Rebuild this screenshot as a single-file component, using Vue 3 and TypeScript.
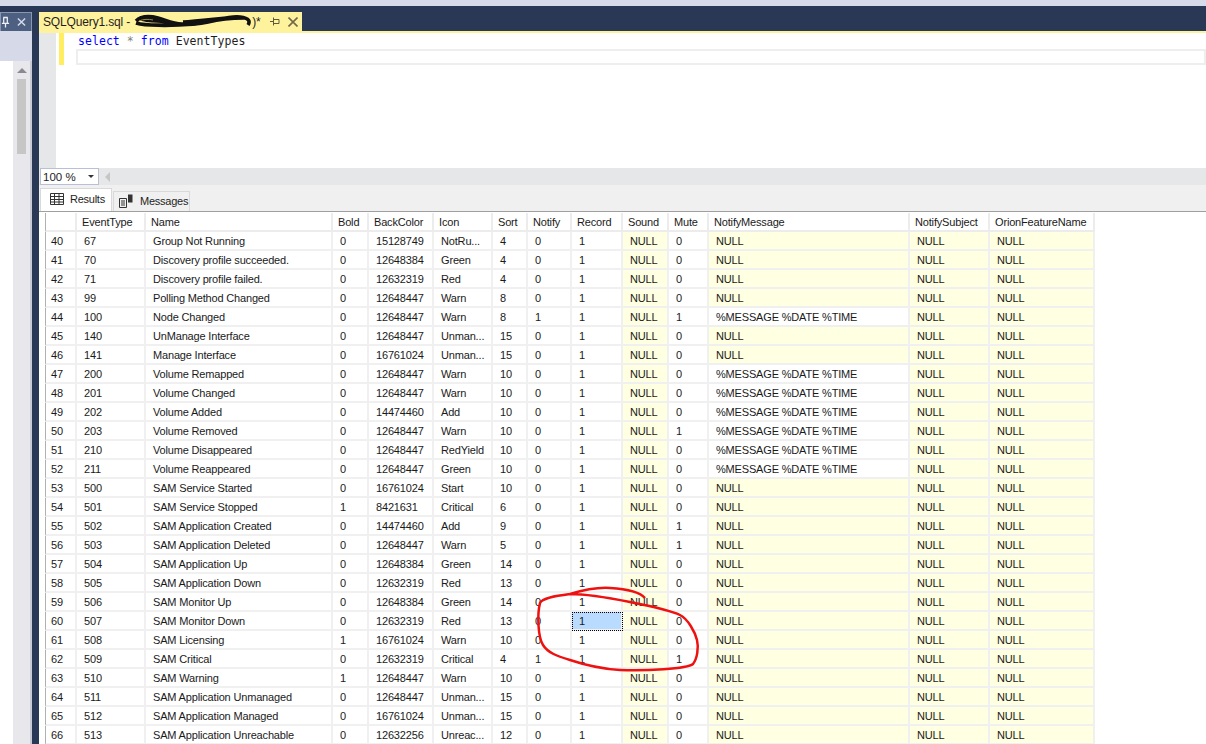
<script setup lang="ts">
const cols = [
  { name: '', w: 32 }, { name: 'EventType', w: 69 }, { name: 'Name', w: 187 }, { name: 'Bold', w: 36 },
  { name: 'BackColor', w: 65 }, { name: 'Icon', w: 59 }, { name: 'Sort', w: 35 }, { name: 'Notify', w: 44 },
  { name: 'Record', w: 51 }, { name: 'Sound', w: 46 }, { name: 'Mute', w: 40 }, { name: 'NotifyMessage', w: 201 },
  { name: 'NotifySubject', w: 80 }, { name: 'OrionFeatureName', w: 105 },
]
const gridTemplate = cols.map((c) => c.w + 'px').join(' ')
const MSG = '%MESSAGE %DATE %TIME'
const raw: [number, string, number, number, string, number, number, number, string][] = [
  [67, 'Group Not Running', 0, 15128749, 'NotRu...', 4, 0, 0, 'NULL'],
  [70, 'Discovery profile succeeded.', 0, 12648384, 'Green', 4, 0, 0, 'NULL'],
  [71, 'Discovery profile failed.', 0, 12632319, 'Red', 4, 0, 0, 'NULL'],
  [99, 'Polling Method Changed', 0, 12648447, 'Warn', 8, 0, 0, 'NULL'],
  [100, 'Node Changed', 0, 12648447, 'Warn', 8, 1, 1, MSG],
  [140, 'UnManage Interface', 0, 12648447, 'Unman...', 15, 0, 0, 'NULL'],
  [141, 'Manage Interface', 0, 16761024, 'Unman...', 15, 0, 0, 'NULL'],
  [200, 'Volume Remapped', 0, 12648447, 'Warn', 10, 0, 0, MSG],
  [201, 'Volume Changed', 0, 12648447, 'Warn', 10, 0, 0, MSG],
  [202, 'Volume Added', 0, 14474460, 'Add', 10, 0, 0, MSG],
  [203, 'Volume Removed', 0, 12648447, 'Warn', 10, 0, 1, MSG],
  [210, 'Volume Disappeared', 0, 12648447, 'RedYield', 10, 0, 0, MSG],
  [211, 'Volume Reappeared', 0, 12648447, 'Green', 10, 0, 0, MSG],
  [500, 'SAM Service Started', 0, 16761024, 'Start', 10, 0, 0, 'NULL'],
  [501, 'SAM Service Stopped', 1, 8421631, 'Critical', 6, 0, 0, 'NULL'],
  [502, 'SAM Application Created', 0, 14474460, 'Add', 9, 0, 1, 'NULL'],
  [503, 'SAM Application Deleted', 0, 12648447, 'Warn', 5, 0, 1, 'NULL'],
  [504, 'SAM Application Up', 0, 12648384, 'Green', 14, 0, 0, 'NULL'],
  [505, 'SAM Application Down', 0, 12632319, 'Red', 13, 0, 0, 'NULL'],
  [506, 'SAM Monitor Up', 0, 12648384, 'Green', 14, 0, 0, 'NULL'],
  [507, 'SAM Monitor Down', 0, 12632319, 'Red', 13, 0, 0, 'NULL'],
  [508, 'SAM Licensing', 1, 16761024, 'Warn', 10, 0, 0, 'NULL'],
  [509, 'SAM Critical', 0, 12632319, 'Critical', 4, 1, 1, 'NULL'],
  [510, 'SAM Warning', 1, 12648447, 'Warn', 10, 0, 0, 'NULL'],
  [511, 'SAM Application Unmanaged', 0, 12648447, 'Unman...', 15, 0, 0, 'NULL'],
  [512, 'SAM Application Managed', 0, 16761024, 'Unman...', 15, 0, 0, 'NULL'],
  [513, 'SAM Application Unreachable', 0, 12632256, 'Unreac...', 12, 0, 0, 'NULL'],
]
const rows = raw.map((r, i) => ({
  n: 40 + i, type: r[0], name: r[1], bold: r[2], back: r[3], icon: r[4], sort: r[5], notify: r[6], mute: r[7], msg: r[8],
}))
</script>

<template>
  <div class="page">
    <div class="topstrip"></div>
    <div class="main">
      <aside class="side">
        <div class="side-head">
          <svg width="10" height="12" viewBox="0 0 10 12"><path d="M2.500 1h5M3 1v6M7 1v6M1 7.500h8M5 8v4" stroke="#eef0f6" stroke-width="1.400" fill="none" /></svg>
          <svg width="10" height="10" viewBox="0 0 10 10"><path d="M1 1l8 8M9 1l-8 8" stroke="#d6dbe9" stroke-width="1.600" /></svg>
        </div>
        <div class="side-sub"></div>
        <div class="side-white">
          <div class="side-scroll">
            <span class="arrow-up"></span>
            <span class="thumb"></span>
          </div>
        </div>
      </aside>
      <section class="doc">
        <div class="tabbar">
          <div class="tab">
            <span class="tabtitle">SQLQuery1.sql -</span>
            <svg class="scribble" width="122" height="15" viewBox="0 0 122 15"><path d="M3 7c5-5 14-5 22-3s14 6 24 6 20-1 30-3 18-5 28-4 10 5 8 8M3 9c10 3 22 2 34 2s26 0 38-3 20-4 36-4M6 4c12 5 22 1 32 5M50 8c16-1 40-4 54-5M20 11c12 1 30 0 44-1" fill="none" stroke="#111" stroke-width="3.600" /><path d="M6 7c4-2 10-2 14-1" fill="none" stroke="#9a8a4a" stroke-width="1" /></svg>
            <span class="tabstar">)*</span>
            <svg class="tabpin" width="10" height="9" viewBox="0 0 10 9"><path d="M3.500 .5v8M3.500 2.500h5.500v4H3.500M0 4.500h3.500" stroke="#5e5a3c" fill="none" /></svg>
            <svg class="tabclose" width="10" height="10" viewBox="0 0 10 10"><path d="M.5.5l9 9M9.500.5l-9 9" stroke="#6f6a48" stroke-width="1.600" /></svg>
          </div>
        </div>
        <div class="tabline"></div>
        <div class="editor">
          <div class="gutter"></div>
          <div class="marginband"><span class="changed"></span></div>
          <div class="code">
            <div class="codeline"><span class="kw">select</span> <span class="op">*</span> <span class="kw">from</span> EventTypes</div>
            <div class="curline"></div>
          </div>
        </div>
        <div class="zoombar">
          <div class="zoombox"><span>100 %</span><span class="caret"></span></div>
          <span class="leftarrow"></span>
        </div>
        <div class="restabs">
          <div class="rtab active">
            <svg width="14" height="12" viewBox="0 0 14 12"><path d="M.5.5h13v11H.5zM.5 3.500h13M.5 6.500h13M.5 9h13M4.500.5v11M9 .5v11" fill="none" stroke="#333" /></svg>
            <span>Results</span>
          </div>
          <div class="rtab">
            <svg width="14" height="14" viewBox="0 0 14 14"><path d="M.5 4.500h7v9h-7zM2 7h4M2 9h4M2 11h4" fill="none" stroke="#333" /><path d="M9 .5h4.500v8H9z" fill="#333" /></svg>
            <span>Messages</span>
          </div>
        </div>
        <div class="gridwrap">
          <div class="gridrow head" :style="{ gridTemplateColumns: gridTemplate }">
            <div v-for="c in cols" :key="c.name" class="hcell">{{ c.name }}</div>
          </div>
          <div v-for="r in rows" :key="r.n" class="gridrow" :style="{ gridTemplateColumns: gridTemplate }">
            <div class="cell num">{{ r.n }}</div>
            <div class="cell">{{ r.type }}</div>
            <div class="cell">{{ r.name }}</div>
            <div class="cell">{{ r.bold }}</div>
            <div class="cell">{{ r.back }}</div>
            <div class="cell">{{ r.icon }}</div>
            <div class="cell">{{ r.sort }}</div>
            <div class="cell">{{ r.notify }}</div>
            <div class="cell" :class="{ selected: r.n === 60 }">1</div>
            <div class="cell null">NULL</div>
            <div class="cell">{{ r.mute }}</div>
            <div class="cell" :class="{ null: r.msg === 'NULL' }">{{ r.msg }}</div>
            <div class="cell null">NULL</div>
            <div class="cell null">NULL</div>
          </div>
        </div>
        <svg class="ink" width="170" height="90" viewBox="0 0 170 90">
          <path d="M110 13C104 6 90 4 75 3 60 2 45 6 35 9 55 9 75 13 95 17 115 21 135 25 145 30 153 34 160 47 162 55 164 63 162 74 158 79 152 84 110 86 85 85 68 84 50 80 35 75 22 71 13 68 8 60 3 52 2 30 5 18 7 13 20 11 35 9" fill="none" stroke="#ef1010" stroke-width="2.500" />
        </svg>
      </section>
    </div>
  </div>
</template>

<style>
html, body { margin: 0; padding: 0; background: #fff; overflow: hidden; }
</style>

<style scoped>
.page { width: 1206px; height: 744px; display: flex; flex-direction: column; overflow: hidden; font-family: "Liberation Sans", Arial, sans-serif; background: #293955; }
.topstrip { height: 6px; background: #d6dbe9; flex: none; }
.main { flex: 1; display: flex; min-height: 0; padding-top: 6px; }
.side { width: 32px; flex: none; display: flex; flex-direction: column; }
.side-head { height: 19px; flex: none; box-sizing: border-box; background: #4d6082; border: 1px solid #8a97b3; border-bottom: none; display: flex; align-items: center; justify-content: flex-end; gap: 7px; padding-right: 5px; }
.side-sub { height: 30px; flex: none; background: #d5d9e8; }
.side-white { flex: 1; min-height: 0; background: #fff; border-right: 2px solid #c8cbd4; box-sizing: border-box; }
.side-scroll { width: 17px; margin-left: 13px; height: 100%; background: #e8e8ec; display: flex; flex-direction: column; align-items: center; padding-top: 7px; box-sizing: border-box; }
.arrow-up { width: 0; height: 0; border-left: 5px solid transparent; border-right: 5px solid transparent; border-bottom: 5px solid #8a8a90; margin-bottom: 6px; }
.thumb { width: 9px; height: 75px; background: #c6c6c6; }
.doc { flex: 1; position: relative; margin-left: 7px; display: flex; flex-direction: column; min-width: 0; background: #fff; }
.tabbar { height: 19px; background: #293955; flex: none; }
.tab { height: 19px; width: 263px; background: #fff29d; display: flex; align-items: center; padding-left: 4px; box-sizing: border-box; font-size: 12px; color: #1e1e1e; }
.tabtitle { white-space: nowrap; letter-spacing: -.15px; }
.scribble { margin-left: 3px; flex: none; }
.tabstar { margin-left: -3px; font-size: 12px; white-space: nowrap; }
.tabpin { margin-left: auto; margin-right: 8px; flex: none; }
.tabclose { margin-right: 4px; flex: none; }
.tabline { height: 2px; background: #fff29d; flex: none; }
.editor { height: 135px; flex: none; display: flex; background: #fff; }
.gutter { width: 17px; background: #e6e7e8; }
.marginband { width: 20px; background: #fff; }
.changed { display: block; width: 5px; height: 32px; background: #ffee62; margin-left: 3px; }
.code { flex: 1; font-family: "DejaVu Sans Mono", monospace; font-size: 11.500px; }
.codeline { height: 16px; line-height: 16px; padding-left: 2px; color: #1e1e1e; white-space: pre; letter-spacing: .05px; }
.kw { color: #0000ff; }
.op { color: #808080; }
.curline { height: 16px; border: 2px solid #eeeeee; box-sizing: border-box; }
.zoombar { height: 17px; flex: none; background: #e6e7e8; display: flex; align-items: center; gap: 6px; }
.zoombox { width: 59px; height: 17px; margin-left: 1px; box-sizing: border-box; background: #fff; border: 1px solid #b8c0d6; display: flex; align-items: center; justify-content: space-between; padding: 0 4px 0 2px; font-size: 11.500px; color: #1e1e1e; }
.caret { width: 0; height: 0; border-left: 3px solid transparent; border-right: 3px solid transparent; border-top: 3px solid #333; }
.leftarrow { width: 0; height: 0; border-top: 5px solid transparent; border-bottom: 5px solid transparent; border-right: 5px solid #c6c6c6; }
.restabs { height: 26px; flex: none; background: #f0f0f0; display: flex; align-items: flex-end; padding-left: 1px; border-bottom: 1px solid #a0a0a0; margin-bottom: 1px; }
.rtab { display: flex; align-items: center; gap: 7px; height: 20px; box-sizing: border-box; width: 77px; padding: 0 0 2px 5px; border: 1px solid #d9d9d9; border-bottom: none; font-size: 11px; letter-spacing: -.25px; color: #1e1e1e; }
.rtab.active { height: 23px; width: 72px; background: #fff; padding: 0 0 3px 9px; margin-right: 1px; gap: 6px; }
.gridwrap { flex: 1; min-height: 0; overflow: hidden; background: #fff; padding-left: 6px; font-size: 11px; letter-spacing: -.17px; color: #1a1a1a; }
.gridrow { display: grid; height: 19px; width: 1050px; }
.hcell { border-right: 2px solid #ececec; border-bottom: 2px solid #ececec; box-sizing: border-box; padding: 1px 0 0 5px; line-height: 16px; white-space: nowrap; overflow: hidden; }
.gridrow.head .hcell:first-child { border-left: 1px solid #b0b0b0; }
.cell { border-right: 2px solid #f0f0f0; border-bottom: 2px solid #f0f0f0; box-sizing: border-box; padding: 1px 0 0 7px; line-height: 16px; white-space: nowrap; overflow: hidden; }
.cell.num { padding-left: 5px; border-left: 1px solid #b0b0b0; }
.null { background: #ffffe1; }
.selected { background: #b9dbff; outline: 1px dotted #000; outline-offset: -1px; }
.ink { position: absolute; left: 496px; top: 573px; pointer-events: none; }
</style>
